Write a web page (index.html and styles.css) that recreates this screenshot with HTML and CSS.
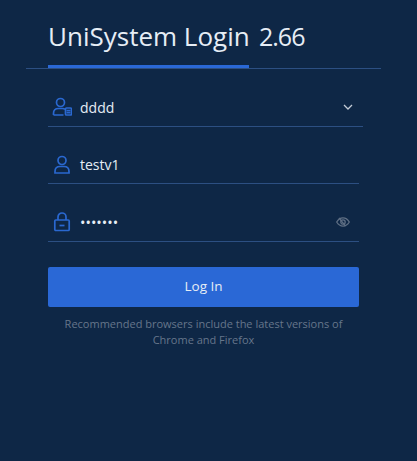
FILE: index.html
```html
<!DOCTYPE html>
<html lang="en">
  <head>
    <meta charset="UTF-8" />
    <meta name="viewport" content="width=device-width, initial-scale=1.0" />
    <title>UniSystem Login</title>
    <link rel="stylesheet" href="styles.css">
  </head>
  <body>
    <div class="login">
      <div class="tabs">
        <div class="tab">UniSystem Login</div>
        <div class="version">2.66</div>
      </div>
      <form class="form">
        <div class="field field-wide">
          <svg class="icon" viewBox="0 0 20 20" width="20" height="20" fill="none" stroke="#2a68d0" stroke-width="1.700">
            <circle cx="8.500" cy="5.500" r="4" />
            <path d="M1.500 18v-1.500c0-3 2-5 5-5h4c1 0 2 .3 2.500 .8M1.500 18h10" />
            <rect x="13.500" y="11" width="6" height="7" rx="1" />
            <path d="M14.500 13.500h4M14.500 15.700h4" />
          </svg>
          <span class="value">dddd</span>
          <svg class="chevron" viewBox="0 0 10 6" width="10" height="6" fill="none" stroke="#c3cbd6" stroke-width="1.300">
            <path d="M1 1l4 4 4-4" />
          </svg>
        </div>
        <div class="field">
          <svg class="icon" viewBox="0 0 20 20" width="20" height="20" fill="none" stroke="#2a68d0" stroke-width="1.700">
            <circle cx="10" cy="5.500" r="4" />
            <path d="M3 18v-1.500c0-3 2-5 5-5h4c3 0 5 2 5 5V18z" />
          </svg>
          <span class="value">testv1</span>
        </div>
        <div class="field">
          <svg class="icon" viewBox="0 0 20 20" width="20" height="20" fill="none" stroke="#2a68d0" stroke-width="1.700">
            <path d="M6 8V5a4 4 0 0 1 8 0v3" />
            <rect x="2.800" y="8" width="14.400" height="10.500" rx="1" />
            <path d="M7.500 13.500h5" />
          </svg>
          <span class="value dots">•••••••</span>
          <svg class="eye" viewBox="0 0 14 10" width="14" height="10" fill="none" stroke="#5f6f84" stroke-width="1.300">
            <path d="M.7 5C2.500 2 4.500 .9 7 .9s4.500 1.100 6.300 4.100C11.500 8 9.500 9.100 7 9.100S2.500 8 .7 5z" />
            <circle cx="7" cy="5" r="2.200" />
            <path d="M3 .8l6.500 8.400" />
          </svg>
        </div>
        <button type="button" class="submit">Log In</button>
      </form>
      <p class="note">Recommended browsers include the latest versions of Chrome and Firefox</p>
    </div>
  </body>
</html>
```

FILE: styles.css
```css
body {
  margin: 0;
  background-color: #0e2746;
  font-family: "Open Sans", "Noto Sans", sans-serif;
  color: #e6edf5;
}
.login {
  width: 417px;
  height: 461px;
  padding-top: 18px;
  box-sizing: border-box;
}
.tabs {
  display: flex;
  align-items: flex-start;
  height: 51px;
  margin-left: 26px;
  width: 355px;
  padding-left: 22px;
  box-sizing: border-box;
  border-bottom: 1px solid #2c4f82;
}
.tab {
  width: 201px;
  height: 50px;
  box-sizing: border-box;
  border-bottom: 3px solid #2a68d6;
  font-size: 26px;
  line-height: 37px;
  white-space: nowrap;
}
.version {
  margin-left: 10px;
  font-size: 25px;
  letter-spacing: -1px;
  line-height: 37px;
}
.form {
  display: flex;
  flex-direction: column;
  width: 311px;
  margin-left: 48px;
}
.field {
  display: flex;
  align-items: center;
  height: 57px;
  box-sizing: border-box;
  padding: 19px 0 0 4px;
  border-bottom: 1px solid #2c4f82;
}
.field-wide {
  width: 315px;
  height: 58px;
}
.field:last-of-type {
  height: 58px;
}
.icon {
  flex: none;
}
.value {
  margin-left: 8px;
  font-size: 14px;
  flex: 1;
}
.dots {
  font-size: 14.500px;
}
.chevron {
  margin-right: 10px;
}
.eye {
  margin-right: 9px;
}
.submit {
  height: 40px;
  margin-top: 25px;
  padding: 0 0 2px;
  border: none;
  border-radius: 2px;
  background-color: #2a68d6;
  color: #e6edf5;
  font-family: inherit;
  font-size: 13.500px;
  cursor: pointer;
}
.note {
  width: 311px;
  margin: 9px 0 0 48px;
  font-size: 11px;
  line-height: 16px;
  text-align: center;
  color: #66768b;
}
```
